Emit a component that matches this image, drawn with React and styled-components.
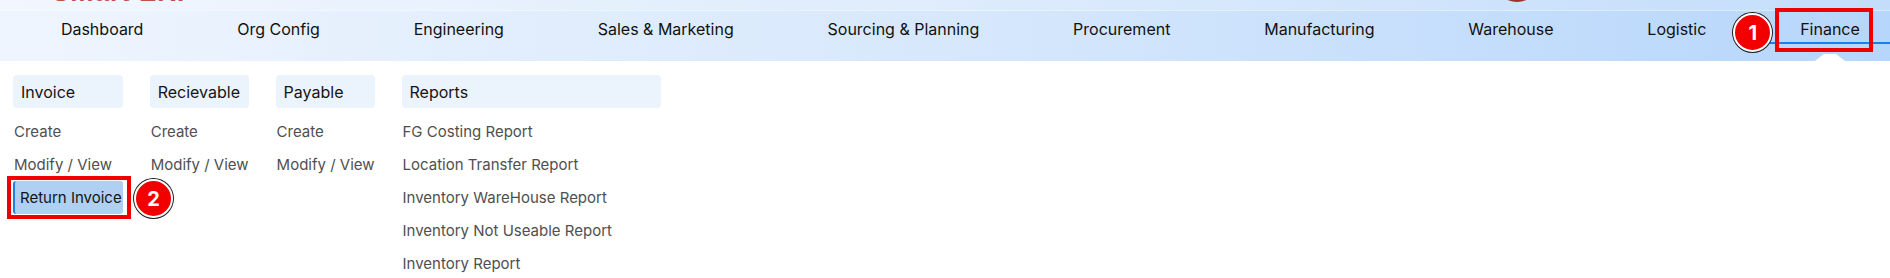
import React from 'react';
import styled, { createGlobalStyle } from 'styled-components';

const GlobalStyle = createGlobalStyle`
  html, body {
    margin: 0;
    padding: 0;
    background: #ffffff;
    overflow: hidden;
  }
  body {
    font-family: "Inter", "Noto Sans", sans-serif;
  }
`;

const Header = styled.header`
  height: 61px;
  background: linear-gradient(90deg, #eff5fe 0%, #d7e8fc 50%, #b6d6fb 100%);
  display: flex;
  flex-direction: column;
`;

const TopStrip = styled.div`
  height: 11px;
  flex-shrink: 0;
  overflow: hidden;
  display: flex;
  align-items: flex-start;
  padding-left: 52px;
  background: rgba(255, 255, 255, 0.18);
  border-bottom: 1px solid rgba(255, 255, 255, 0.35);
  box-sizing: border-box;
`;

const Logo = styled.span`
  font-family: "Liberation Sans", sans-serif;
  font-weight: 700;
  font-size: 26px;
  line-height: 26px;
  margin-top: -21px;
  color: #c0504d;
  letter-spacing: 1px;
`;

const Avatar = styled.span`
  width: 46px;
  height: 46px;
  border-radius: 50%;
  background: #a4302c;
  margin-top: -44px;
  margin-left: auto;
  margin-right: 350px;
`;

const NavRow = styled.nav`
  display: flex;
  padding-left: 14px;
  height: 33px;
  white-space: nowrap;
`;

const NavItem = styled.div`
  position: relative;
  padding: 4px 46.9px 0;
  height: 33px;
  box-sizing: border-box;
  display: flex;
  align-items: center;
  font-size: 16px;
  color: #111111;
  border-bottom: 2px solid ${(p) => (p.$active ? '#1a80ec' : 'transparent')};
`;

const Caret = styled.span`
  position: absolute;
  left: 50%;
  top: 43px;
  width: 30px;
  height: 7px;
  margin-left: -15px;
  background: #ffffff;
  clip-path: polygon(30% 0, 70% 0, 100% 100%, 0 100%);
`;

const Badge = styled.span`
  position: absolute;
  left: ${(p) => p.$left}px;
  top: ${(p) => p.$top}px;
  width: 35px;
  height: 35px;
  border-radius: 50%;
  background: #f20000;
  border: 2px solid #ffffff;
  box-shadow: 0 0 0 1px #1d1d1d;
  color: #ffffff;
  font-family: "Inter", sans-serif;
  font-weight: 700;
  font-size: 20px;
  display: flex;
  align-items: center;
  justify-content: center;
  z-index: 3;
`;

const Highlight = styled.span`
  position: absolute;
  left: ${(p) => p.$left}px;
  top: ${(p) => p.$top}px;
  width: ${(p) => p.$width}px;
  height: ${(p) => p.$height}px;
  border: 4px solid #ee0000;
  box-sizing: border-box;
  pointer-events: none;
  z-index: 2;
`;

const Dropdown = styled.section`
  display: flex;
  align-items: flex-start;
  gap: 27px;
  padding: 14px 13px 0;
`;

const Column = styled.div`
  display: flex;
  flex-direction: column;
  min-width: ${(p) => p.$minWidth || 0}px;
`;

const ColumnTitle = styled.div`
  height: 33px;
  display: flex;
  align-items: center;
  padding: 0 8px;
  margin-bottom: 7px;
  background: #ebf3fd;
  border-radius: 4px;
  font-size: 16px;
  color: #151515;
`;

const MenuItem = styled.div`
  position: relative;
  height: 33px;
  display: flex;
  align-items: center;
  font-size: 15px;
  color: ${(p) => (p.$active ? '#141414' : '#4f4f4f')};
  box-sizing: border-box;
  padding: ${(p) => (p.$active ? '0 1px 0 5px' : '0 0 0 1px')};
  background: ${(p) => (p.$active ? '#b0d0f3' : 'transparent')};
  border-left: ${(p) => (p.$active ? '2px solid #1a80ec' : 'none')};
  border-radius: ${(p) => (p.$active ? '3px' : '0')};
`;

const navItems = [
  'Dashboard',
  'Org Config',
  'Engineering',
  'Sales & Marketing',
  'Sourcing & Planning',
  'Procurement',
  'Manufacturing',
  'Warehouse',
  'Logistic',
  'Finance',
];

const columns = [
  { title: 'Invoice', items: ['Create', 'Modify / View', 'Return Invoice'], active: 'Return Invoice' },
  { title: 'Recievable', items: ['Create', 'Modify / View'] },
  { title: 'Payable', items: ['Create', 'Modify / View'] },
  {
    title: 'Reports',
    minWidth: 259,
    items: [
      'FG Costing Report',
      'Location Transfer Report',
      'Inventory WareHouse Report',
      'Inventory Not Useable Report',
      'Inventory Report',
    ],
  },
];

export default function App() {
  return (
    <>
      <GlobalStyle />
      <Header>
        <TopStrip>
          <Logo>Smart ERP</Logo>
          <Avatar />
        </TopStrip>
        <NavRow>
          {navItems.map((name) => (
            <NavItem key={name} $active={name === 'Finance'}>
              {name}
              {name === 'Finance' && (
                <>
                  <Caret />
                  <Badge $left={-20} $top={2}>1</Badge>
                  <Highlight $left={22} $top={-3} $width={98} $height={44} />
                </>
              )}
            </NavItem>
          ))}
        </NavRow>
      </Header>
      <Dropdown>
        {columns.map((col) => (
          <Column key={col.title} $minWidth={col.minWidth}>
            <ColumnTitle>{col.title}</ColumnTitle>
            {col.items.map((item) => (
              <MenuItem key={item} $active={item === col.active}>
                {item}
                {item === col.active && (
                  <>
                    <Highlight $left={-8} $top={-5} $width={124} $height={43} />
                    <Badge $left={119} $top={-2}>2</Badge>
                  </>
                )}
              </MenuItem>
            ))}
          </Column>
        ))}
      </Dropdown>
    </>
  );
}
